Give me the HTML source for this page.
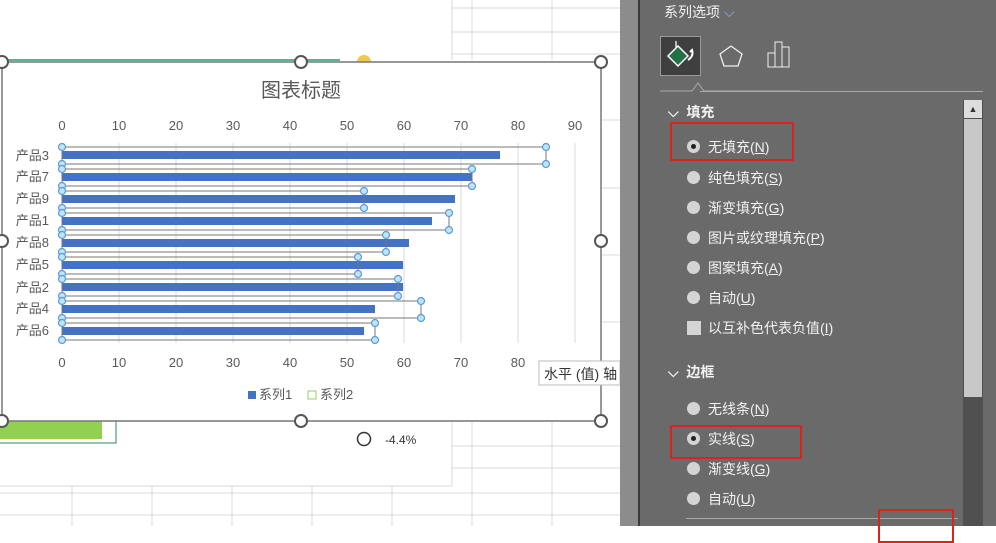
<!DOCTYPE html>
<html><head><meta charset="utf-8"><style>
body{margin:0;width:996px;height:526px;overflow:hidden;background:#fff;position:relative;font-family:"Liberation Sans","Noto Sans CJK SC",sans-serif}
.p{position:absolute}
.panel{left:620px;top:0;width:376px;height:526px;background:#6a6a6a}
.t{position:absolute;color:#f2f2f2;font-size:14px;white-space:nowrap}
.r{position:absolute;width:13px;height:13px;border-radius:50%;background:#d4d4d4}
.r.on::after{content:"";position:absolute;left:4px;top:4px;width:5px;height:5px;border-radius:50%;background:#222}
.box{position:absolute;border:2px solid #d9241c}
u{text-decoration:underline}
</style></head><body>
<svg class="p" style="left:0;top:0" width="620" height="526">
<g stroke="#d9d9d9" stroke-width="1">
<line x1="452" y1="0" x2="452" y2="60"/><line x1="472" y1="0" x2="472" y2="60"/><line x1="552" y1="0" x2="552" y2="60"/>
<line x1="452" y1="8" x2="620" y2="8"/><line x1="452" y1="32" x2="620" y2="32"/><line x1="452" y1="54" x2="620" y2="54"/>
<line x1="0" y1="493" x2="620" y2="493"/><line x1="0" y1="515" x2="620" y2="515"/>
<line x1="72" y1="486" x2="72" y2="526"/><line x1="152" y1="486" x2="152" y2="526"/><line x1="232" y1="486" x2="232" y2="526"/><line x1="312" y1="486" x2="312" y2="526"/><line x1="392" y1="486" x2="392" y2="526"/>
<line x1="472" y1="421" x2="472" y2="526"/><line x1="552" y1="421" x2="552" y2="526"/>
<line x1="452" y1="421" x2="452" y2="486"/><line x1="0" y1="486" x2="452" y2="486"/>
<line x1="452" y1="468" x2="620" y2="468"/><line x1="452" y1="446" x2="620" y2="446"/>
<line x1="602" y1="120" x2="620" y2="120"/><line x1="602" y1="188" x2="620" y2="188"/><line x1="602" y1="255" x2="620" y2="255"/><line x1="602" y1="322" x2="620" y2="322"/>
</g>
<line x1="0" y1="60" x2="340" y2="60" stroke="#1e9a6e" stroke-width="1.5"/>
<circle cx="364" cy="62" r="7" fill="#f2c94c"/>
<rect x="0" y="421" width="102" height="18" fill="#92d050"/>
<rect x="-1" y="421" width="117" height="22" fill="none" stroke="#2e8b57" stroke-width="1"/>
<rect x="2" y="62" width="599" height="359" fill="#fff" stroke="#777" stroke-width="1.5"/>
<text x="301" y="97" font-size="20" fill="#595959" text-anchor="middle" font-family="Liberation Sans,Noto Sans CJK SC,sans-serif">图表标题</text>
<g stroke="#d9d9d9"><line x1="119" y1="143" x2="119" y2="343"/><line x1="176" y1="143" x2="176" y2="343"/><line x1="233" y1="143" x2="233" y2="343"/><line x1="290" y1="143" x2="290" y2="343"/><line x1="347" y1="143" x2="347" y2="343"/><line x1="404" y1="143" x2="404" y2="343"/><line x1="461" y1="143" x2="461" y2="343"/><line x1="518" y1="143" x2="518" y2="343"/><line x1="575" y1="143" x2="575" y2="343"/></g>
<g font-size="13" fill="#595959" text-anchor="middle">
<text x="62" y="130">0</text><text x="119" y="130">10</text><text x="176" y="130">20</text><text x="233" y="130">30</text><text x="290" y="130">40</text><text x="347" y="130">50</text><text x="404" y="130">60</text><text x="461" y="130">70</text><text x="518" y="130">80</text><text x="575" y="130">90</text>
<text x="62" y="367">0</text><text x="119" y="367">10</text><text x="176" y="367">20</text><text x="233" y="367">30</text><text x="290" y="367">40</text><text x="347" y="367">50</text><text x="404" y="367">60</text><text x="461" y="367">70</text><text x="518" y="367">80</text>
</g>
<g font-size="13" fill="#595959" text-anchor="end">
<text x="49" y="160">产品3</text><text x="49" y="181">产品7</text><text x="49" y="203">产品9</text><text x="49" y="225">产品1</text><text x="49" y="247">产品8</text><text x="49" y="269">产品5</text><text x="49" y="292">产品2</text><text x="49" y="313">产品4</text><text x="49" y="335">产品6</text>
</g>
<g fill="#4472c4">
<rect x="62" y="151" width="438" height="8"/><rect x="62" y="173" width="410" height="8"/><rect x="62" y="195" width="393" height="8"/><rect x="62" y="217" width="370" height="8"/><rect x="62" y="239" width="347" height="8"/><rect x="62" y="261" width="341" height="8"/><rect x="62" y="283" width="341" height="8"/><rect x="62" y="305" width="313" height="8"/><rect x="62" y="327" width="302" height="8"/>
</g>
<g fill="none" stroke="#777" stroke-width="1">
<rect x="62" y="147" width="484" height="17"/><rect x="62" y="169" width="410" height="17"/><rect x="62" y="191" width="302" height="17"/><rect x="62" y="213" width="387" height="17"/><rect x="62" y="235" width="324" height="17"/><rect x="62" y="257" width="296" height="17"/><rect x="62" y="279" width="336" height="17"/><rect x="62" y="301" width="359" height="17"/><rect x="62" y="323" width="313" height="17"/>
</g>
<g fill="#bfe3f7" stroke="#5b9bd5" stroke-width="1.2">
<circle cx="62" cy="147" r="3.5"/><circle cx="546" cy="147" r="3.5"/><circle cx="62" cy="164" r="3.5"/><circle cx="546" cy="164" r="3.5"/>
<circle cx="62" cy="169" r="3.5"/><circle cx="472" cy="169" r="3.5"/><circle cx="62" cy="186" r="3.5"/><circle cx="472" cy="186" r="3.5"/>
<circle cx="62" cy="191" r="3.5"/><circle cx="364" cy="191" r="3.5"/><circle cx="62" cy="208" r="3.5"/><circle cx="364" cy="208" r="3.5"/>
<circle cx="62" cy="213" r="3.5"/><circle cx="449" cy="213" r="3.5"/><circle cx="62" cy="230" r="3.5"/><circle cx="449" cy="230" r="3.5"/>
<circle cx="62" cy="235" r="3.5"/><circle cx="386" cy="235" r="3.5"/><circle cx="62" cy="252" r="3.5"/><circle cx="386" cy="252" r="3.5"/>
<circle cx="62" cy="257" r="3.5"/><circle cx="358" cy="257" r="3.5"/><circle cx="62" cy="274" r="3.5"/><circle cx="358" cy="274" r="3.5"/>
<circle cx="62" cy="279" r="3.5"/><circle cx="398" cy="279" r="3.5"/><circle cx="62" cy="296" r="3.5"/><circle cx="398" cy="296" r="3.5"/>
<circle cx="62" cy="301" r="3.5"/><circle cx="421" cy="301" r="3.5"/><circle cx="62" cy="318" r="3.5"/><circle cx="421" cy="318" r="3.5"/>
<circle cx="62" cy="323" r="3.5"/><circle cx="375" cy="323" r="3.5"/><circle cx="62" cy="340" r="3.5"/><circle cx="375" cy="340" r="3.5"/>
</g>
<rect x="248" y="391" width="8" height="8" fill="#4472c4"/>
<rect x="308" y="391" width="8" height="8" fill="#fff" stroke="#92d050"/>
<text x="259" y="399" font-size="13" fill="#595959">系列1</text>
<text x="320" y="399" font-size="13" fill="#595959">系列2</text>
<g fill="#fff" stroke="#555" stroke-width="2">
<circle cx="2" cy="62" r="6"/><circle cx="301" cy="62" r="6"/><circle cx="601" cy="62" r="6"/><circle cx="2" cy="241" r="6"/><circle cx="601" cy="241" r="6"/><circle cx="2" cy="421" r="6"/><circle cx="301" cy="421" r="6"/><circle cx="601" cy="421" r="6"/>
</g>
<circle cx="364" cy="439" r="6.5" fill="#fff" stroke="#333" stroke-width="1.5"/>
<text x="385" y="444" font-size="12" fill="#333">-4.4%</text>
<rect x="539" y="361" width="81" height="24" fill="#fff" stroke="#bbb"/>
<text x="544" y="379" font-size="14" fill="#333">水平 (值) 轴</text>
</svg>
<div class="p" style="left:620px;top:0;width:18px;height:526px;background:#8c8c8c"></div>
<div class="p" style="left:638px;top:0;width:2px;height:526px;background:#3a3a3a"></div>
<div class="p panel" style="left:640px;width:356px"></div>
<div class="t" style="left:664px;top:2px;font-size:14px">系列选项 <span style="color:#8fb4e6">⌵</span></div>
<div class="p" style="left:660px;top:36px;width:39px;height:38px;background:#3f3f3f;border:1px solid #999"></div>
<svg class="p" style="left:660px;top:36px" width="140" height="56">
<path d="M18 10 L28 20 L18 30 L8 20Z" fill="#217346" stroke="#fff" stroke-width="1.5"/>
<path d="M16 5 v7" stroke="#fff" stroke-width="1.3"/>
<path d="M28 24 q6 -4 4 -10 l-2 2" stroke="#fff" stroke-width="2" fill="none"/>
<path d="M71 10 L82 18 L78 30 L64 30 L60 18Z" fill="none" stroke="#eee" stroke-width="1.3"/>
<rect x="108" y="17" width="7" height="14" fill="none" stroke="#eee"/><rect x="115" y="6" width="7" height="25" fill="none" stroke="#eee"/><rect x="122" y="11" width="7" height="20" fill="none" stroke="#eee"/>
<path d="M-2 55 H32 L38 47 L44 55 H140" fill="none" stroke="#aaa"/>
</svg>
<div class="p" style="left:700px;top:91px;width:283px;height:1px;background:#aaa"></div>
<div class="t" style="left:668px;top:102px;font-weight:bold">⌵ &nbsp;填充</div>
<div class="box" style="left:670px;top:122px;width:120px;height:35px"></div>
<div class="r on" style="left:687px;top:140px"></div><div class="t" style="left:708px;top:137px">无填充(<u>N</u>)</div>
<div class="r" style="left:687px;top:171px"></div><div class="t" style="left:708px;top:168px">纯色填充(<u>S</u>)</div>
<div class="r" style="left:687px;top:201px"></div><div class="t" style="left:708px;top:198px">渐变填充(<u>G</u>)</div>
<div class="r" style="left:687px;top:231px"></div><div class="t" style="left:708px;top:228px">图片或纹理填充(<u>P</u>)</div>
<div class="r" style="left:687px;top:261px"></div><div class="t" style="left:708px;top:258px">图案填充(<u>A</u>)</div>
<div class="r" style="left:687px;top:291px"></div><div class="t" style="left:708px;top:288px">自动(<u>U</u>)</div>
<div class="p" style="left:687px;top:321px;width:14px;height:14px;background:#d4d4d4"></div><div class="t" style="left:708px;top:318px">以互补色代表负值(<u>I</u>)</div>
<div class="t" style="left:668px;top:362px;font-weight:bold">⌵ &nbsp;边框</div>
<div class="r" style="left:687px;top:402px"></div><div class="t" style="left:708px;top:399px">无线条(<u>N</u>)</div>
<div class="box" style="left:670px;top:425px;width:128px;height:30px"></div>
<div class="r on" style="left:687px;top:432px"></div><div class="t" style="left:708px;top:429px">实线(<u>S</u>)</div>
<div class="r" style="left:687px;top:462px"></div><div class="t" style="left:708px;top:459px">渐变线(<u>G</u>)</div>
<div class="r" style="left:687px;top:492px"></div><div class="t" style="left:708px;top:489px">自动(<u>U</u>)</div>
<div class="p" style="left:686px;top:518px;width:272px;height:1px;background:#aaa"></div>
<div class="box" style="left:878px;top:509px;width:72px;height:30px"></div>
<div class="p" style="left:963px;top:100px;width:20px;height:426px;background:#505050"></div>
<div class="p" style="left:964px;top:100px;width:18px;height:18px;background:#ddd;font-size:9px;text-align:center;line-height:18px;color:#333">▲</div>
<div class="p" style="left:964px;top:119px;width:18px;height:278px;background:#c8c8c8"></div>
</body></html>
